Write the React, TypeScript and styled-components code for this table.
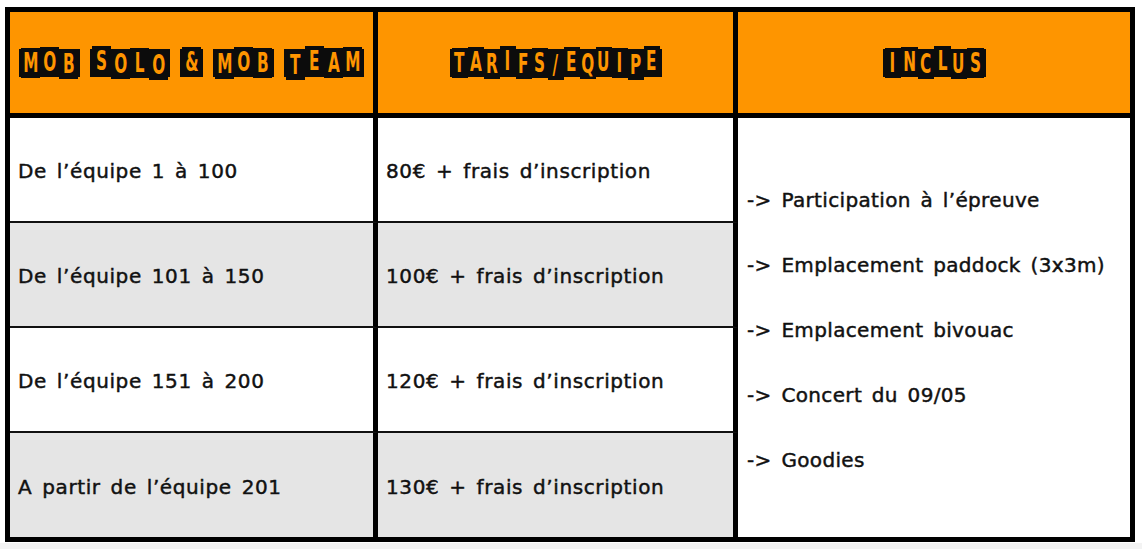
import React from 'react'
import styled, { createGlobalStyle } from 'styled-components'

const GlobalStyle = createGlobalStyle`
  html, body {
    margin: 0;
    padding: 0;
    background: #ffffff;
  }
  * {
    box-sizing: border-box;
  }
`

const orange = '#fe9500'

const Page = styled.div`
  width: 1142px;
  height: 549px;
  padding: 7px 7px 0 5px;
  background: linear-gradient(to bottom, #ffffff 0, #ffffff 543px, #f3f3f3 543px);
`

const Table = styled.div`
  width: 1130px;
  height: 535px;
  border: 5px solid #000;
  display: grid;
  grid-template-columns: 368px 360px 1fr;
  grid-template-rows: 106px 105px 105px 105px 104px;
  font-family: 'DejaVu Sans', 'Noto Sans', sans-serif;
  color: #111;
`

const HeadCell = styled.div<{ $last?: boolean }>`
  background: ${orange};
  border-bottom: 5px solid #000;
  border-right: ${({ $last }) => ($last ? 'none' : '5px solid #000')};
  display: flex;
  align-items: center;
  justify-content: center;
`

const Title = styled.div`
  display: flex;
  align-items: center;
  gap: 10px;
`

const Word = styled.span`
  display: flex;
  align-items: center;
  height: 28px;
  padding: 0 2px;
  background: #0c0c0c;
`

const Letter = styled.span<{ $w: number }>`
  display: block;
  width: ${({ $w }) => $w}px;
  height: 30px;
  background: #0c0c0c;
  color: ${orange};
  text-align: center;
  font-family: 'DejaVu Sans Condensed', 'Liberation Sans Narrow', sans-serif;
  font-weight: 700;
  font-size: 20px;
  line-height: 31px;
`

const Glyph = styled.span`
  display: inline-block;
  transform: scale(0.85, 1.3);
`

const Cell = styled.div<{ $grey?: boolean; $bottom?: boolean }>`
  background: ${({ $grey }) => ($grey ? '#e5e5e5' : '#ffffff')};
  border-right: 5px solid #000;
  border-bottom: ${({ $bottom }) => ($bottom ? '2px solid #111' : 'none')};
  display: flex;
  align-items: center;
  padding: 3px 0 0 8px;
  font-size: 20px;
  letter-spacing: 0.6px;
  word-spacing: 3px;
  -webkit-text-stroke: 0.45px #111;
`

const Included = styled.div`
  grid-column: 3;
  grid-row: 2 / span 4;
  background: #fff;
  display: flex;
  flex-direction: column;
  justify-content: center;
  gap: 40px;
  padding: 5px 0 0 9px;
  font-size: 20px;
  letter-spacing: 0.35px;
  word-spacing: 3px;
  -webkit-text-stroke: 0.45px #111;
`

const Item = styled.div`
  line-height: 25px;
`

const jitter = [0, -1, 1, -2, 1, 0, 2, -1, 1, -1, 0, 2, -2]

const StampTitle = ({ text, width }: { text: string; width: number }) => {
  let n = 0
  return (
    <Title>
      {text.split(' ').map((word, wi) => (
        <Word key={wi}>
          {word.split('').map((ch, ci) => {
            const j = jitter[n++ % jitter.length]
            return (
              <Letter key={ci} $w={width} style={{ transform: `translateY(${j}px)` }}>
                <Glyph>{ch}</Glyph>
              </Letter>
            )
          })}
        </Word>
      ))}
    </Title>
  )
}

const rows = [
  ['De l’équipe 1 à 100', '80€ + frais d’inscription'],
  ['De l’équipe 101 à 150', '100€ + frais d’inscription'],
  ['De l’équipe 151 à 200', '120€ + frais d’inscription'],
  ['A partir de l’équipe 201', '130€ + frais d’inscription'],
]

const included = [
  '-> Participation à l’épreuve',
  '-> Emplacement paddock (3x3m)',
  '-> Emplacement bivouac',
  '-> Concert du 09/05',
  '-> Goodies',
]

export default function App() {
  return (
    <>
      <GlobalStyle />
      <Page>
        <Table>
          <HeadCell>
            <StampTitle text="MOB SOLO & MOB TEAM" width={19} />
          </HeadCell>
          <HeadCell>
            <StampTitle text="TARIFS/EQUIPE" width={16} />
          </HeadCell>
          <HeadCell $last>
            <StampTitle text="INCLUS" width={16.5} />
          </HeadCell>
          {rows.map(([team, price], i) => (
            <React.Fragment key={i}>
              <Cell $grey={i % 2 === 1} $bottom={i < 3} style={{ gridColumn: 1, gridRow: i + 2 }}>
                {team}
              </Cell>
              <Cell $grey={i % 2 === 1} $bottom={i < 3} style={{ gridColumn: 2, gridRow: i + 2 }}>
                {price}
              </Cell>
            </React.Fragment>
          ))}
          <Included>
            {included.map((t) => (
              <Item key={t}>{t}</Item>
            ))}
          </Included>
        </Table>
      </Page>
    </>
  )
}
